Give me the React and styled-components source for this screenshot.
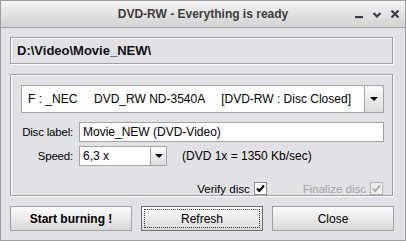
import React from "react";
import styled, { createGlobalStyle, css } from "styled-components";

const Global = createGlobalStyle`
  body {
    margin: 0;
    background: #e2e1e6;
    font-family: "Liberation Sans", Arial, sans-serif;
  }
`;

const Window = styled.div`
  width: 406px;
  height: 241px;
  box-sizing: border-box;
  border: 1px solid #9e9e9e;
  background: #e2e1e6;
  display: flex;
  flex-direction: column;
`;

const TitleBar = styled.div`
  height: 26px;
  border-bottom: 1px solid #a2a2a2;
  background: linear-gradient(#f5f5f5, #d2d2d2);
  display: grid;
  grid-template-columns: 1fr auto 1fr;
  align-items: center;
`;

const Title = styled.div`
  grid-column: 2;
  font-weight: bold;
  font-size: 12px;
  color: #3d3d3d;
`;

const Controls = styled.div`
  justify-self: end;
  display: flex;
  gap: 8px;
  padding-right: 5px;
  color: #3a3f48;
  svg {
    display: block;
  }
`;

const Content = styled.div`
  padding: 9px 12px 0 9px;
  display: flex;
  flex-direction: column;
`;

const etched = css`
  border: 1px solid #a0a0a0;
  box-shadow: inset 1px 1px 0 #fff, 1px 1px 0 #fff;
`;

const PathBox = styled.div`
  ${etched};
  height: 27px;
  box-sizing: border-box;
  display: flex;
  align-items: center;
  padding-left: 6px;
  font-weight: bold;
  font-size: 13px;
  color: #111;
`;

const GroupBox = styled.div`
  ${etched};
  margin-top: 10px;
  height: 122px;
  box-sizing: border-box;
  padding: 10px 8px 0 10px;
  display: flex;
  flex-direction: column;
`;

const Field = styled.div`
  height: ${(p) => p.$h}px;
  box-sizing: border-box;
  border: 1px solid #a3a3a3;
  background: #fff;
  display: flex;
  align-items: stretch;
  font-size: 12px;
  color: #000;
  width: ${(p) => (p.$w ? `${p.$w}px` : "auto")};
  flex: ${(p) => (p.$w ? "none" : "1")};
`;

const FieldText = styled.div`
  flex: 1;
  display: flex;
  align-items: center;
  padding-left: ${(p) => p.$pad || 3}px;
  white-space: pre;
`;

const DropButton = styled.div`
  width: ${(p) => p.$w}px;
  border-left: 1px solid #a3a3a3;
  background: linear-gradient(#fafafa, #dcdcdc);
  display: flex;
  align-items: center;
  justify-content: center;
  &::after {
    content: "";
    border-left: 4px solid transparent;
    border-right: 4px solid transparent;
    border-top: 4px solid #000;
  }
`;

const Row = styled.div`
  display: flex;
  align-items: center;
  margin-top: ${(p) => p.$mt}px;
`;

const Label = styled.div`
  flex: none;
  width: 52px;
  margin-right: 6px;
  display: flex;
  justify-content: flex-end;
  white-space: nowrap;
  font-size: 11.5px;
  letter-spacing: -0.2px;
  color: #000;
`;

const Note = styled.div`
  margin-left: 15px;
  font-size: 12px;
  color: #000;
`;

const CheckRow = styled.div`
  margin-top: 16px;
  display: flex;
  justify-content: flex-end;
  gap: 36px;
  padding-right: 1px;
`;

const CheckItem = styled.div`
  display: flex;
  align-items: center;
  gap: 4px;
  font-size: 11.5px;
  color: ${(p) => (p.$disabled ? "#a4a4a4" : "#000")};
`;

const Box = styled.div`
  width: 13px;
  height: 13px;
  box-sizing: border-box;
  border: 1px solid ${(p) => (p.$disabled ? "#b4b4b4" : "#8e8e8e")};
  background: ${(p) => (p.$disabled ? "#eeeef0" : "#fff")};
  display: flex;
  align-items: center;
  justify-content: center;
  svg {
    display: block;
  }
`;

const ButtonRow = styled.div`
  margin-top: 10px;
  margin-right: -1px;
  display: grid;
  grid-template-columns: repeat(3, 1fr);
  column-gap: 9px;
`;

const Button = styled.div`
  position: relative;
  height: 25px;
  box-sizing: border-box;
  border: 1px solid ${(p) => (p.$focused ? "#6e6e6e" : "#a0a0a0")};
  background: linear-gradient(#fbfbfb, #d9d9d9);
  display: flex;
  align-items: center;
  justify-content: center;
  font-size: ${(p) => (p.$bold ? "12px" : "12px")};
  font-weight: ${(p) => (p.$bold ? "bold" : "normal")};
  color: #000;
  ${(p) =>
    p.$focused &&
    css`
      &::after {
        content: "";
        position: absolute;
        inset: 2px;
        border: 1px dotted #333;
      }
    `}
`;

function Check({ disabled }) {
  return (
    <Box $disabled={disabled}>
      <svg width="9" height="9" viewBox="0 0 9 9">
        <polyline
          points="1,4.5 3.3,7 8,1.5"
          fill="none"
          stroke={disabled ? "#b0b0b0" : "#000"}
          strokeWidth="2"
        />
      </svg>
    </Box>
  );
}

export default function App() {
  return (
    <>
      <Global />
      <Window>
        <TitleBar>
          <Title>DVD-RW - Everything is ready</Title>
          <Controls>
            <svg width="10" height="10" viewBox="0 0 10 10">
              <rect x="1" y="7" width="8" height="2.2" fill="currentColor" />
            </svg>
            <svg width="10" height="10" viewBox="0 0 10 10">
              <polyline points="1.5,4 5,7.5 8.5,4" fill="none" stroke="currentColor" strokeWidth="2.2" />
            </svg>
            <svg width="10" height="10" viewBox="0 0 10 10">
              <path d="M1.5 1.5 L8.5 8.5 M8.5 1.5 L1.5 8.5" stroke="currentColor" strokeWidth="2.2" />
            </svg>
          </Controls>
        </TitleBar>
        <Content>
          <PathBox>D:\Video\Movie_NEW\</PathBox>
          <GroupBox>
            <Field $h={21}>
              <FieldText $pad={6}>{"F : _NEC     DVD_RW ND-3540A     [DVD-RW : Disc Closed]"}</FieldText>
              <DropButton $w={18} />
            </Field>
            <Row $mt={9}>
              <Label>Disc label:</Label>
              <Field $h={20}>
                <FieldText>Movie_NEW (DVD-Video)</FieldText>
              </Field>
            </Row>
            <Row $mt={4}>
              <Label>Speed:</Label>
              <Field $h={20} $w={88}>
                <FieldText>6,3 x</FieldText>
                <DropButton $w={15} />
              </Field>
              <Note>(DVD 1x = 1350 Kb/sec)</Note>
            </Row>
            <CheckRow>
              <CheckItem>
                Verify disc
                <Check />
              </CheckItem>
              <CheckItem $disabled>
                Finalize disc
                <Check disabled />
              </CheckItem>
            </CheckRow>
          </GroupBox>
          <ButtonRow>
            <Button $bold>Start burning !</Button>
            <Button $focused>Refresh</Button>
            <Button>Close</Button>
          </ButtonRow>
        </Content>
      </Window>
    </>
  );
}
